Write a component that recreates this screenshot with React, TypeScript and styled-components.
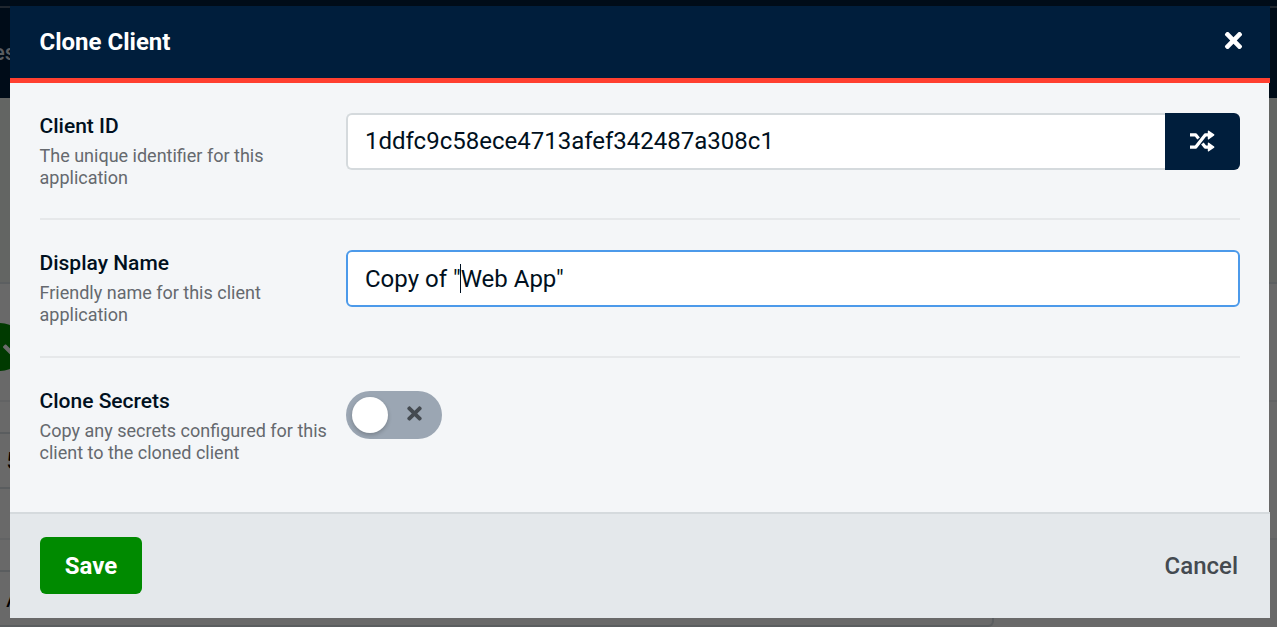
import React from 'react';
import styled, { createGlobalStyle } from 'styled-components';
import { FaTimes, FaCheck } from 'react-icons/fa';

const GlobalStyle = createGlobalStyle`
  * { box-sizing: border-box; }
  body { margin: 0; background: #696969; overflow: hidden; }
  button { font-family: inherit; border: 0; padding: 0; cursor: pointer; }
`;

const Screen = styled.div`
  position: relative;
  width: 1277px;
  height: 627px;
  overflow: hidden;
  font-family: Roboto, 'Liberation Sans', sans-serif;
  color: #001020;
`;

/* The dimmed page under the dialog */
const Page = styled.div`
  height: 100%;
  display: flex;
  flex-direction: column;
`;
const TopLine = styled.div`
  height: 8px;
  flex: none;
  background: #000c18;
  border-bottom: 2px solid #20272f;
`;
const NavBar = styled.div`
  height: 90px;
  flex: none;
  padding-top: 31px;
  background: #000c18;
  color: #595d61;
  font-size: 22px;
  font-weight: 500;
  line-height: 28px;
`;
const NavText = styled.span`
  display: block;
  width: 30px;
  margin-left: -7px;
`;
const Banner = styled.div`
  height: 186px;
  flex: none;
  background: #636563;
  border-bottom: 2px solid #5c5f61;
`;
const PageRow = styled.div<{ $h: number; $line?: string }>`
  height: ${p => p.$h}px;
  flex: none;
  display: flex;
  align-items: center;
  border-bottom: 2px solid ${p => p.$line ?? '#626364'};
  font-size: 24px;
  line-height: 28px;
`;
const Split = styled.div`
  display: flex;
  flex: 1;
  justify-content: space-between;
`;
const LeftColumn = styled.div`
  width: 600px;
`;
const RightColumn = styled.div`
  width: 600px;
`;
const Status = styled.div`
  width: 48px;
  height: 48px;
  margin: 9px 0 0 -24px;
  border-radius: 50%;
  background: #003a00;
  color: #6b6b6b;
  display: flex;
  align-items: center;
  justify-content: center;
  svg { width: 26px; height: 26px; margin-left: 27px; }
`;
const RowText = styled.span`
  margin-left: 6px;
  color: #000;
`;
const PanelEdge = styled.div`
  position: absolute;
  left: -20px;
  top: 571px;
  width: 1014px;
  height: 56px;
  border: 2px solid #5a5d5f;
  border-radius: 0 0 6px 0;
  border-top: 0;
`;

const Dialog = styled.section`
  position: absolute;
  left: 10px;
  top: 6px;
  width: 1260px;
  height: 612px;
  display: flex;
  flex-direction: column;
`;
const Header = styled.header`
  height: 77px;
  flex: none;
  padding: 0 24px 0 29.5px;
  display: flex;
  align-items: center;
  justify-content: space-between;
  background: #001e3c;
  border-bottom: 5px solid #ff4030;
  color: #fff;
`;
const Title = styled.h1`
  margin: 0;
  font-size: 24px;
  line-height: 28px;
  font-weight: 700;
`;
const CloseButton = styled.button`
  display: flex;
  margin-top: -3px;
  background: none;
  color: #fff;
  svg { width: 25px; height: 25px; }
`;
const Body = styled.div`
  flex: 1;
  width: 1259px;
  padding: 30px 29px 0 30px;
  background: #f4f6f8;
`;
const Field = styled.div<{ $h?: number }>`
  display: flex;
  align-items: flex-start;
  height: ${p => p.$h ?? 107}px;
  margin-bottom: 30px;
  border-bottom: 2px solid #e6e8ea;
  &:last-child { border: 0; margin: 0; }
`;
const Caption = styled.div`
  width: 306.5px;
  margin-left: -0.5px;
  flex: none;
`;
const Label = styled.label`
  display: block;
  font-size: 21px;
  line-height: 26px;
  font-weight: 500;
`;
const Hint = styled.p<{ $w?: number }>`
  margin: 6px 0 0;
  width: ${p => p.$w ?? 260}px;
  font-size: 18px;
  line-height: 22px;
  color: #65696e;
`;
const InputGroup = styled.div`
  flex: 1;
  display: flex;
`;
const Input = styled.div<{ $focused?: boolean; $joined?: boolean }>`
  flex: 1;
  height: 57px;
  padding: ${p => (p.$joined ? '0 17px 2px' : '0 17px')};
  display: flex;
  align-items: center;
  background: #fff;
  border: 2px solid ${p => (p.$focused ? '#4c9aea' : '#d5dadd')};
  border-radius: ${p => (p.$joined ? '6px 0 0 6px' : '6px')};
  ${p => p.$joined && 'border-right: 0;'}
  font-size: 24px;
  line-height: 28px;
  white-space: pre;
`;
const Caret = styled.i`
  width: 1px;
  height: 29px;
  margin: 0 0 0 -1px;
  background: #001020;
`;
const RandomButton = styled.button`
  width: 75px;
  height: 57px;
  display: flex;
  align-items: center;
  justify-content: center;
  padding-bottom: 1px;
  background: #001e3c;
  color: #fff;
  border-radius: 0 6px 6px 0;
`;
const Toggle = styled.button`
  width: 96px;
  height: 48px;
  margin-top: 3px;
  padding: 0 17px 0 6px;
  border-radius: 24px;
  display: flex;
  align-items: center;
  justify-content: space-between;
  background: #9ba6b3;
  color: #444a50;
  svg { width: 21px; height: 21px; margin-top: -3px; }
`;
const Knob = styled.span`
  width: 36px;
  height: 36px;
  border-radius: 50%;
  background: #fff;
  box-shadow: 0 2px 4px rgba(0, 0, 0, 0.22);
`;
const Footer = styled.footer`
  height: 106px;
  flex: none;
  padding: 0 32px 0 30px;
  display: flex;
  align-items: center;
  justify-content: space-between;
  border-top: 2px solid #d5dadd;
  background: #e4e8eb;
`;
const SaveButton = styled.button`
  width: 102px;
  height: 57px;
  margin-bottom: 1px;
  border-radius: 6px;
  background: #008a00;
  color: #fff;
  font-size: 24px;
  font-weight: 700;
`;
const CancelButton = styled.button`
  background: none;
  color: #444a50;
  font-size: 24px;
  font-weight: 500;
`;

/* Two crossing tracks with solid arrowheads */
const ShuffleIcon = () => (
  <svg width="25" height="22" viewBox="0 0 25 22" fill="none" stroke="currentColor" strokeWidth="3.2">
    <path d="M0 17.1H5.8L15.2 4.9H19" strokeLinejoin="round" />
    <path d="M0 4.9H5.8L8.6 8.4M12.4 13.5L15.2 17.1H19" strokeLinejoin="round" />
    <path
      d="M18.5 1.2L23.7 4.9L18.5 8.8ZM18.5 13.2L23.7 17.1L18.5 20.8Z"
      fill="currentColor"
      strokeWidth="1.4"
      strokeLinejoin="round"
    />
  </svg>
);

export default function App() {
  return (
    <Screen>
      <GlobalStyle />
      <Page>
        <TopLine />
        <NavBar><NavText>es</NavText></NavBar>
        <Banner />
        <Split>
          <LeftColumn>
            <PageRow $h={118}><Status><FaCheck /></Status></PageRow>
            <PageRow $h={32} $line="#5a5d5f" />
            <PageRow $h={55} $line="#5a5d5f"><RowText>5</RowText></PageRow>
            <PageRow $h={51} />
            <PageRow $h={32} $line="#5a5d5f" />
            <PageRow $h={55} $line="#5a5d5f"><RowText>A</RowText></PageRow>
          </LeftColumn>
          <RightColumn>
            <PageRow $h={118} />
            <PageRow $h={138} />
          </RightColumn>
        </Split>
      </Page>
      <PanelEdge />
      <Dialog role="dialog">
        <Header>
          <Title>Clone Client</Title>
          <CloseButton aria-label="Close"><FaTimes /></CloseButton>
        </Header>
        <Body>
          <Field>
            <Caption>
              <Label>Client ID</Label>
              <Hint>The unique identifier for this application</Hint>
            </Caption>
            <InputGroup>
              <Input $joined>1ddfc9c58ece4713afef342487a308c1</Input>
              <RandomButton aria-label="Generate"><ShuffleIcon /></RandomButton>
            </InputGroup>
          </Field>
          <Field $h={108}>
            <Caption>
              <Label>Display Name</Label>
              <Hint>Friendly name for this client application</Hint>
            </Caption>
            <InputGroup>
              <Input $focused>Copy of "<Caret />Web App"</Input>
            </InputGroup>
          </Field>
          <Field>
            <Caption>
              <Label>Clone Secrets</Label>
              <Hint $w={300}>Copy any secrets configured for this client to the cloned client</Hint>
            </Caption>
            <Toggle aria-label="Clone Secrets"><Knob /><FaTimes /></Toggle>
          </Field>
        </Body>
        <Footer>
          <SaveButton>Save</SaveButton>
          <CancelButton>Cancel</CancelButton>
        </Footer>
      </Dialog>
    </Screen>
  );
}
